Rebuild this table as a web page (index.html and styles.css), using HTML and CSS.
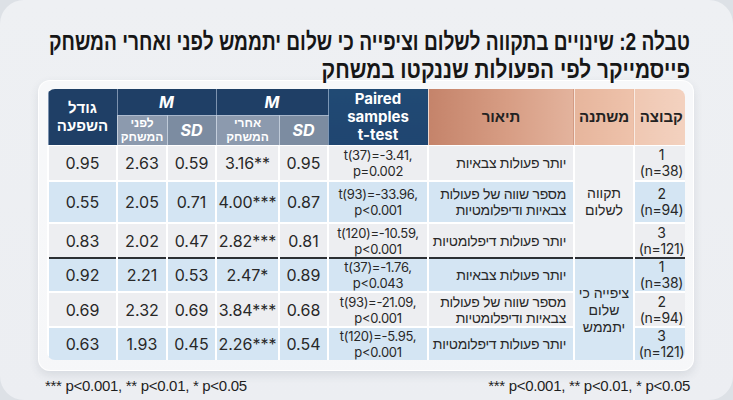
FILE: index.html
```html
<!DOCTYPE html>
<html lang="he">
<head>
<meta charset="utf-8">
<link rel="stylesheet" href="styles.css">
</head>
<body>
<div class="frame">
  <h1 class="title" dir="rtl"><span class="tl tl1">טבלה 2: שינויים בתקווה לשלום וציפייה כי שלום יתממש לפני ואחרי המשחק</span><span class="tl tl2">פייסמייקר לפי הפעולות שננקטו במשחק</span></h1>
  <div class="card">
    <div class="table-wrap">
      <table class="data" dir="rtl">
        <colgroup>
          <col class="c-group"><col class="c-var"><col class="c-desc"><col class="c-t">
          <col class="c-sd"><col class="c-after"><col class="c-sd"><col class="c-before"><col class="c-eff">
        </colgroup>
        <thead>
          <tr class="h1">
            <th rowspan="2" class="o o3">קבוצה</th>
            <th rowspan="2" class="o o2">משתנה</th>
            <th rowspan="2" class="o o1">תיאור</th>
            <th rowspan="2" class="n ttest" dir="ltr">Paired<br>samples<br>t-test</th>
            <th colspan="2" class="n mh">M</th>
            <th colspan="2" class="n mh">M</th>
            <th rowspan="2" class="n eff">גודל<br>השפעה</th>
          </tr>
          <tr class="h2">
            <th class="s sd">SD</th>
            <th class="s sm">אחרי<br>המשחק</th>
            <th class="s sd">SD</th>
            <th class="s sm">לפני<br>המשחק</th>
          </tr>
        </thead>
        <tbody>
          <tr class="r1 g">
            <td class="grp">1<br><span dir="ltr">(n=38)</span></td>
            <td rowspan="3" class="var g">תקווה<br>לשלום</td>
            <td class="desc">יותר פעולות צבאיות</td>
            <td class="tt" dir="ltr">t(37)=-3.41,<br>p=0.002</td>
            <td>0.95</td><td dir="ltr">3.16**</td><td>0.59</td><td>2.63</td><td>0.95</td>
          </tr>
          <tr class="r2 b">
            <td class="grp">2<br><span dir="ltr">(n=94)</span></td>
            <td class="desc">מספר שווה של פעולות<br>צבאיות ודיפלומטיות</td>
            <td class="tt" dir="ltr">t(93)=-33.96,<br>p&lt;0.001</td>
            <td>0.87</td><td dir="ltr">4.00***</td><td>0.71</td><td>2.05</td><td>0.55</td>
          </tr>
          <tr class="r3 g">
            <td class="grp">3<br><span dir="ltr">(n=121)</span></td>
            <td class="desc">יותר פעולות דיפלומטיות</td>
            <td class="tt" dir="ltr">t(120)=-10.59,<br>p&lt;0.001</td>
            <td>0.81</td><td dir="ltr">2.82***</td><td>0.47</td><td>2.02</td><td>0.83</td>
          </tr>
          <tr class="r4 b split">
            <td class="grp">1<br><span dir="ltr">(n=38)</span></td>
            <td rowspan="3" class="var b">ציפייה כי<br>שלום<br>יתממש</td>
            <td class="desc">יותר פעולות צבאיות</td>
            <td class="tt" dir="ltr">t(37)=-1.76,<br>p&lt;0.043</td>
            <td>0.89</td><td dir="ltr">2.47*</td><td>0.53</td><td>2.21</td><td>0.92</td>
          </tr>
          <tr class="r5 g">
            <td class="grp">2<br><span dir="ltr">(n=94)</span></td>
            <td class="desc">מספר שווה של פעולות<br>צבאיות ודיפלומטיות</td>
            <td class="tt" dir="ltr">t(93)=-21.09,<br>p&lt;0.001</td>
            <td>0.68</td><td dir="ltr">3.84***</td><td>0.69</td><td>2.32</td><td>0.69</td>
          </tr>
          <tr class="r6 b">
            <td class="grp">3<br><span dir="ltr">(n=121)</span></td>
            <td class="desc">יותר פעולות דיפלומטיות</td>
            <td class="tt" dir="ltr">t(120)=-5.95,<br>p&lt;0.001</td>
            <td>0.54</td><td dir="ltr">2.26***</td><td>0.45</td><td>1.93</td><td>0.63</td>
          </tr>
        </tbody>
      </table>
    </div>
  </div>
  <div class="notes">
    <span>*** p&lt;0.001, ** p&lt;0.01, * p&lt;0.05</span>
    <span>*** p&lt;0.001, ** p&lt;0.01, * p&lt;0.05</span>
  </div>
</div>
</body>
</html>
```

FILE: styles.css
```css
html, body {
  margin: 0;
  padding: 0;
  background: #dde1e6;
}
.frame {
  width: 733px;
  height: 400px;
  box-sizing: border-box;
  border-radius: 24px;
  background: linear-gradient(180deg, #eef0f3 0%, #eceef2 100%);
  overflow: hidden;
  padding-top: 28px;
}
.title {
  margin: 0 0 -4px 0;
  padding: 0 43px 0 0;
  text-align: right;
  font-family: "Liberation Sans", "DejaVu Sans", sans-serif;
  font-weight: bold;
  font-size: 24px;
  line-height: 28px;
  color: #161616;
  white-space: nowrap;
}
.tl {
  display: block;
  transform-origin: right center;
}
.tl1 { transform: scaleX(0.797); }
.tl2 { transform: scaleX(0.865); }
.card {
  margin: 0 0 0 38px;
  width: 656px;
  box-sizing: border-box;
  padding: 8px 8px 10px 8px;
  background: rgba(255, 255, 255, 0.55);
  border: 1px solid rgba(255, 255, 255, 0.9);
  border-radius: 12px;
  box-shadow: 0 4px 10px rgba(60, 70, 90, 0.12);
}
.table-wrap {
  border-radius: 8px;
  overflow: hidden;
}
.data {
  width: 640px;
  table-layout: fixed;
  border-collapse: collapse;
  font-family: "Inter", "Liberation Sans", "DejaVu Sans", sans-serif;
  color: #282828;
}
.c-group { width: 54px; }
.c-var { width: 60px; }
.c-desc { width: 146px; }
.c-t { width: 100px; }
.c-sd { width: 49px; }
.c-after { width: 63px; }
.c-before { width: 50px; }
.c-eff { width: 69px; }

.data th {
  padding: 0;
  text-align: center;
  font-weight: bold;
}
.h1 { height: 26px; }
.h2 { height: 30px; }
.o {
  color: #222;
  font-size: 15px;
  border-left: 1px solid rgba(255, 255, 255, 0.6);
}
.o1 { background: linear-gradient(90deg, #c4836a 0%, #d79d84 55%, #e3b39d 100%); }
.o2 { background: linear-gradient(90deg, #e6b59c 0%, #eec2ab 100%); }
.o3 { background: linear-gradient(90deg, #efc7b2 0%, #f3d2c0 100%); }
.n {
  background: #1f3f66;
  color: #fff;
  border-left: 1px solid rgba(200, 215, 235, 0.55);
}
.ttest {
  background: linear-gradient(180deg, #214a74 0%, #1f4570 100%);
  font-size: 15px;
  line-height: 18px;
}
.eff {
  font-size: 15px;
  line-height: 18px;
}
.mh {
  font-style: italic;
  font-size: 16px;
  border-bottom: 1px solid rgba(200, 215, 235, 0.55);
}
.s {
  color: #fff;
  border-left: 1px solid rgba(220, 228, 240, 0.7);
}
.sd {
  background: #7c8ca1;
  font-style: italic;
  font-size: 16px;
}
.sm {
  background: #8c9aae;
  font-weight: normal;
  font-size: 12px;
  line-height: 14px;
}

.data td {
  padding: 0;
  text-align: center;
  font-size: 16px;
  line-height: 16px;
  border-left: 2px solid #ffffff;
  border-top: 2px solid #ffffff;
}
.data tbody tr:first-child td { border-top: 1px solid #ffffff; }
.g { background: #edeef1; }
.b { background: #d4e5f3; }
.var.g { background: #f0f1f3; }
.var.b { background: #d6e6f3; }
.r1 { height: 36px; }
.r2 { height: 42px; }
.r3 { height: 35px; }
.r4 { height: 33px; }
.r5 { height: 35px; }
.r6 { height: 33px; }
.data tr.split td { border-top: 2px solid #2c2f33; }
.data .var { border-top: 1px solid #fff; }
.data tr.split td.var { border-top: 2px solid #2c2f33; }
.data td.grp {
  font-size: 14px;
  line-height: 16px;
  letter-spacing: -0.3px;
}
.data td.desc {
  text-align: right;
  padding-right: 7px;
  font-size: 14px;
  line-height: 16px;
  letter-spacing: -0.3px;
  white-space: nowrap;
}
.data td.tt {
  font-size: 13px;
  line-height: 16px;
  letter-spacing: -0.3px;
  white-space: nowrap;
}
.data td.var {
  font-size: 14px;
  line-height: 17px;
}
.notes {
  display: flex;
  justify-content: space-between;
  padding: 6px 43px 0 45px;
  font-family: "Liberation Sans", "DejaVu Sans", sans-serif;
  font-size: 15px;
  line-height: 18px;
  color: #1e1e1e;
  letter-spacing: -0.3px;
}
```
